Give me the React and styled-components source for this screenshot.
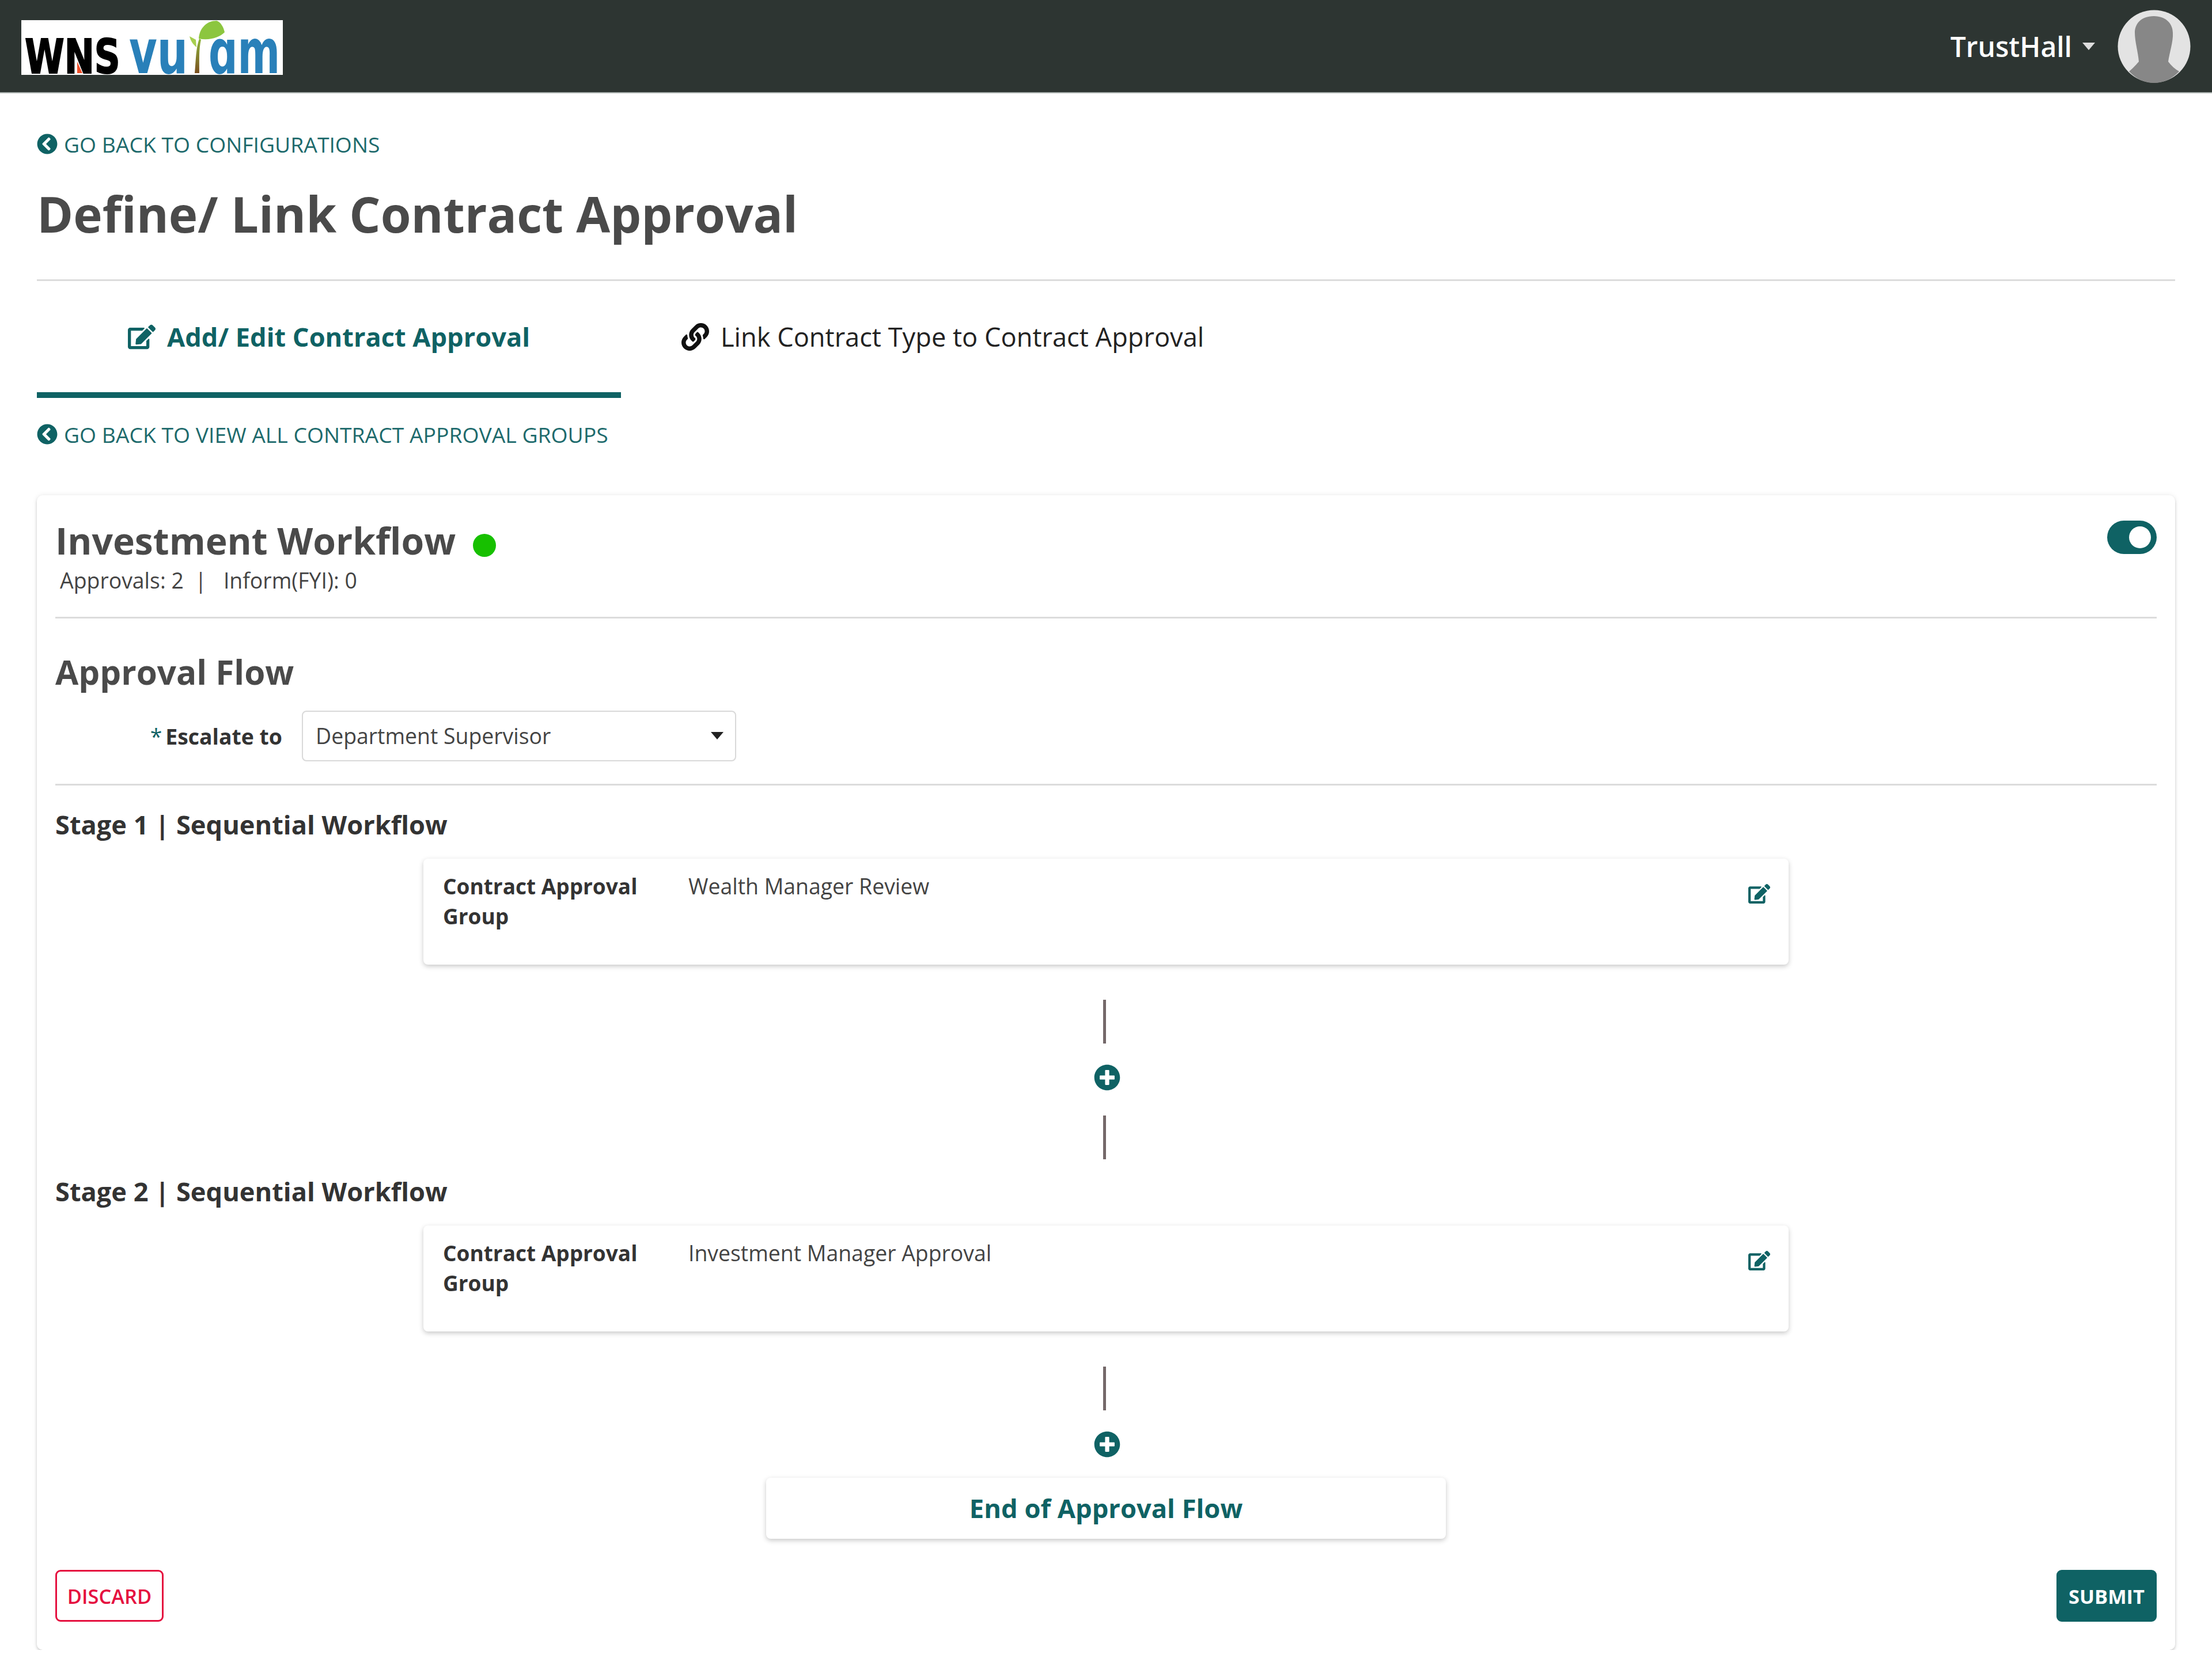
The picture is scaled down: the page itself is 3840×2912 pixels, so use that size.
import styled, { createGlobalStyle } from "styled-components";
import { FaChevronCircleLeft, FaEdit, FaLink, FaPlusCircle } from "react-icons/fa";

const teal = "#0f6264";

const GlobalStyle = createGlobalStyle`
  html, body {
    margin: 0;
    padding: 0;
    background: #fff;
    font-family: "Open Sans", "Liberation Sans", sans-serif;
  }
  * { box-sizing: border-box; }
`;

const Header = styled.header`
  height: 162px;
  background: #2d3532;
  border-bottom: 2px solid #a9b0ad;
  display: flex;
  align-items: center;
  justify-content: space-between;
  padding: 0 37px;
`;

const LogoBox = styled.svg`
  width: 454px;
  height: 95px;
  display: block;
  margin-top: 4px;
  overflow: visible;
`;

const LogoText = styled.text`
  font-family: "DejaVu Sans", sans-serif;
  font-weight: 700;
`;

const UserArea = styled.div`
  display: flex;
  align-items: center;
`;

const UserName = styled.span`
  color: #fff;
  font-size: 48px;
  font-weight: 600;
`;

const Caret = styled.span`
  width: 0;
  height: 0;
  border-left: 11px solid transparent;
  border-right: 11px solid transparent;
  border-top: 13px solid ${(p) => p.$color || "#ddd"};
  margin-left: ${(p) => p.$gap || "18px"};
`;

const Avatar = styled.svg`
  width: 127px;
  height: 127px;
  margin-left: 39px;
  display: block;
`;

const Main = styled.main`
  padding: 0 64px;
`;

const BackLink = styled.a`
  display: flex;
  align-items: center;
  gap: 11px;
  height: 60px;
  margin-top: ${(p) => p.$top};
  color: #1d6a6c;
  font-size: 37.3px;
  white-space: nowrap;
  svg {
    width: 36px;
    height: 36px;
    color: ${teal};
  }
`;

const Title = styled.h1`
  margin: 41px 0 0;
  height: 100px;
  line-height: 100px;
  font-size: 85.4px;
  font-weight: 700;
  color: #4a4a4a;
`;

const Rule = styled.hr`
  margin: ${(p) => p.$top || "0"} 0 0;
  border: none;
  height: 3px;
  background: #dcdcdc;
`;

const Tabs = styled.nav`
  display: flex;
  height: 203px;
`;

const Tab = styled.div`
  display: flex;
  align-items: center;
  justify-content: center;
  gap: 20px;
  height: 100%;
  width: ${(p) => (p.$active ? "1014px" : "auto")};
  padding-left: ${(p) => (p.$active ? "0" : "105px")};
  color: ${(p) => (p.$active ? teal : "#222")};
  font-size: 45.2px;
  font-weight: ${(p) => (p.$active ? 700 : 400)};
  border-bottom: 10px solid ${(p) => (p.$active ? teal : "transparent")};
  white-space: nowrap;
  svg {
    width: 48px;
    height: 48px;
    color: ${(p) => (p.$active ? teal : "#111")};
  }
`;

const Card = styled.section`
  margin-top: 76px;
  padding: 38px 32px 49px;
  border-radius: 10px;
  background: #fff;
  box-shadow: 0 3px 4px rgba(0, 0, 0, 0.16), 0 0 10px rgba(0, 0, 0, 0.09);
`;

const CardHead = styled.div`
  display: flex;
  justify-content: space-between;
  align-items: flex-start;
`;

const NameRow = styled.div`
  display: flex;
  align-items: center;
  gap: 30px;
  height: 80px;
`;

const Name = styled.h2`
  margin: 0;
  font-size: 64.2px;
  font-weight: 700;
  color: #4a4a4a;
`;

const StatusDot = styled.span`
  width: 40px;
  height: 40px;
  border-radius: 50%;
  background: #17c000;
  margin-top: 18px;
`;

const Toggle = styled.div`
  width: 86px;
  height: 58px;
  margin-top: 6px;
  border-radius: 29px;
  background: ${teal};
  display: flex;
  align-items: center;
  justify-content: flex-end;
  padding-right: 10px;
  &::after {
    content: "";
    width: 38px;
    height: 38px;
    border-radius: 50%;
    background: #fff;
  }
`;

const Meta = styled.div`
  margin: 5px 0 0 8px;
  height: 50px;
  line-height: 50px;
  font-size: 37.4px;
  color: #444;
  white-space: pre;
`;

const SectionTitle = styled.h3`
  margin: 58px 0 0;
  height: 70px;
  line-height: 70px;
  font-size: 58.4px;
  font-weight: 700;
  color: #4a4a4a;
`;

const FieldRow = styled.div`
  display: flex;
  align-items: center;
  margin-top: 32px;
`;

const FieldLabel = styled.label`
  width: 394px;
  text-align: right;
  font-size: 37.4px;
  font-weight: 700;
  color: #333;
  span {
    color: ${teal};
    font-weight: 400;
    margin-right: 6px;
  }
`;

const SelectBox = styled.div`
  width: 754px;
  height: 88px;
  margin-left: 34px;
  padding: 0 20px 2px 22px;
  display: flex;
  align-items: center;
  justify-content: space-between;
  border: 2px solid #d9d9d9;
  border-radius: 8px;
  font-size: 37.4px;
  color: #444;
`;

const StageTitle = styled.h4`
  margin: ${(p) => p.$top} 0 0;
  height: 60px;
  line-height: 60px;
  font-size: 45.2px;
  font-weight: 700;
  color: #333;
`;

const StageCard = styled.div`
  width: 2370px;
  height: 184px;
  margin: 29px auto 0;
  padding: 22px 32px 0 34px;
  display: grid;
  grid-template-columns: 426px 1fr auto;
  align-items: start;
  border-radius: 8px;
  background: #fff;
  box-shadow: 0 3px 9px rgba(0, 0, 0, 0.22);
  font-size: 37.4px;
  line-height: 52px;
  color: #444;
`;

const StageLabel = styled.div`
  font-weight: 700;
  font-size: 37px;
  color: #333;
  width: 380px;
`;

const EditButton = styled.span`
  color: ${teal};
  display: flex;
  margin-top: 20px;
  svg {
    width: 38px;
    height: 38px;
  }
`;

const Flow = styled.div`
  display: flex;
  flex-direction: column;
  align-items: center;
`;

const Connector = styled.div`
  width: 5px;
  height: 76px;
  margin-top: ${(p) => p.$top};
  margin-right: 6px;
  background: #75696a;
`;

const AddStage = styled.span`
  display: flex;
  margin-top: 36px;
  margin-left: 4px;
  color: ${teal};
  svg {
    width: 46px;
    height: 46px;
  }
`;

const EndCard = styled.div`
  width: 1180px;
  height: 106px;
  margin-top: 35px;
  padding-bottom: 2px;
  display: flex;
  align-items: center;
  justify-content: center;
  border-radius: 8px;
  background: #fff;
  box-shadow: 0 3px 9px rgba(0, 0, 0, 0.22);
  color: ${teal};
  font-size: 45.3px;
  font-weight: 700;
`;

const Actions = styled.div`
  display: flex;
  justify-content: space-between;
  margin-top: 54px;
`;

const ActionButton = styled.button`
  height: 90px;
  width: ${(p) => (p.$primary ? "174px" : "188px")};
  padding: 0;
  border: 3px solid ${(p) => (p.$primary ? teal : "#e5103f")};
  border-radius: 9px;
  background: ${(p) => (p.$primary ? teal : "#fff")};
  color: ${(p) => (p.$primary ? "#fff" : "#e5103f")};
  font-family: inherit;
  font-size: 34.4px;
  font-weight: ${(p) => (p.$primary ? 700 : 600)};
`;

const Logo = () => (
  <LogoBox viewBox="0 0 454 95">
    <defs>
      <linearGradient id="stem" x1="0" y1="0" x2="0" y2="1">
        <stop offset="0" stopColor="#8db63a" />
        <stop offset="1" stopColor="#7a4f20" />
      </linearGradient>
    </defs>
    <rect width="454" height="95" fill="#fff" />
    <LogoText transform="translate(6 92) scale(0.76 1)" fontSize="82" fill="#000" stroke="#000" strokeWidth="2">WNS</LogoText>
    <polygon points="97,72 106,92 97,92" fill="#f0502a" />
    <LogoText transform="translate(187 92) scale(0.7 1)" fontSize="107" fill="#2980b9">vu</LogoText>
    <LogoText transform="translate(325 92) scale(0.66 1)" fontSize="107" fill="#2980b9">ɑm</LogoText>
    <path d="M301 92 C303 70 303 48 309 32 L312 34 C308 50 309 70 309 92 Z" fill="url(#stem)" />
    <path d="M308 32 C309 14 322 1 339 1 C346 3 351 12 353 21 C344 30 326 36 308 32 Z" fill="#8cc63f" />
    <path d="M292 28 L303 34 L304 47 C298 42 294 36 292 28 Z" fill="#a6cf4e" />
  </LogoBox>
);

const ProfilePicture = () => (
  <Avatar viewBox="0 0 127 127">
    <circle cx="63.5" cy="63.5" r="63" fill="#e3e3e3" />
    <path
      d="M63 11 C40 11 30 25 30 40 C30 55 36 75 37 90 C30 98 25 103 20 107 C32 120 47 127 63 127 C80 127 95 120 107 107 C100 103 93 97 88 90 C90 75 97 55 96 40 C96 25 85 11 63 11 Z"
      fill="#878787"
    />
  </Avatar>
);

const stages = [
  { title: "Stage 1 | Sequential Workflow", group: "Wealth Manager Review", top: "38px" },
  { title: "Stage 2 | Sequential Workflow", group: "Investment Manager Approval", top: "26px" },
];

const App = () => {
  return (
    <>
      <GlobalStyle />
      <Header>
        <Logo />
        <UserArea>
          <UserName>TrustHall</UserName>
          <Caret />
          <ProfilePicture />
        </UserArea>
      </Header>
      <Main>
        <BackLink $top="58px">
          <FaChevronCircleLeft />
          GO BACK TO CONFIGURATIONS
        </BackLink>
        <Title>Define/ Link Contract Approval</Title>
        <Rule $top="64px" />
        <Tabs>
          <Tab $active>
            <FaEdit />
            Add/ Edit Contract Approval
          </Tab>
          <Tab>
            <FaLink />
            Link Contract Type to Contract Approval
          </Tab>
        </Tabs>
        <BackLink $top="33px">
          <FaChevronCircleLeft />
          GO BACK TO VIEW ALL CONTRACT APPROVAL GROUPS
        </BackLink>
        <Card>
          <CardHead>
            <NameRow>
              <Name>Investment Workflow</Name>
              <StatusDot />
            </NameRow>
            <Toggle />
          </CardHead>
          <Meta>{"Approvals: 2  |   Inform(FYI): 0"}</Meta>
          <Rule $top="38px" />
          <SectionTitle>Approval Flow</SectionTitle>
          <FieldRow>
            <FieldLabel>
              <span>*</span>Escalate to
            </FieldLabel>
            <SelectBox>
              Department Supervisor
              <Caret $color="#222" $gap="0" />
            </SelectBox>
          </FieldRow>
          <Rule $top="39px" />
          {stages.map((stage, index) => (
            <div key={stage.title}>
              <StageTitle $top={stage.top}>{stage.title}</StageTitle>
              <StageCard>
                <StageLabel>Contract Approval Group</StageLabel>
                <div>{stage.group}</div>
                <EditButton>
                  <FaEdit />
                </EditButton>
              </StageCard>
              <Flow>
                <Connector $top="61px" />
                <AddStage>
                  <FaPlusCircle />
                </AddStage>
                {index === 0 ? <Connector $top="43px" /> : <EndCard>End of Approval Flow</EndCard>}
              </Flow>
            </div>
          ))}
          <Actions>
            <ActionButton>DISCARD</ActionButton>
            <ActionButton $primary>SUBMIT</ActionButton>
          </Actions>
        </Card>
      </Main>
    </>
  );
};

export default App;
